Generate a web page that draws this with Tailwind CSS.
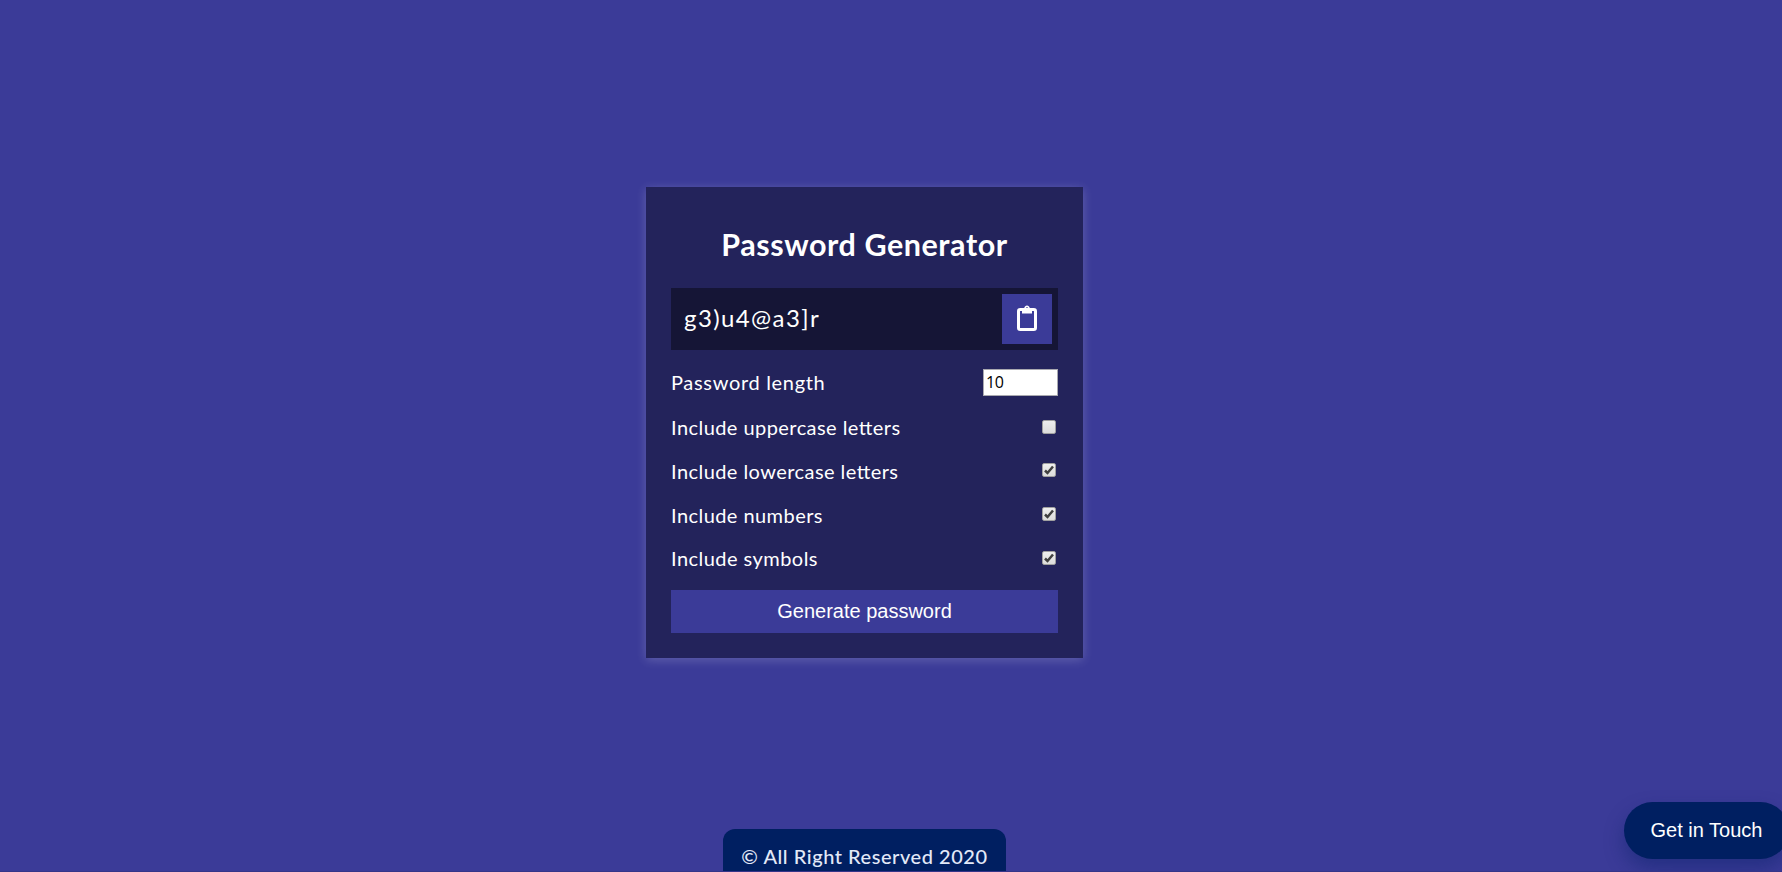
<!DOCTYPE html>
<html lang="en">
<head>
<meta charset="utf-8">
<title>Password Generator</title>
<script src="https://cdn.jsdelivr.net/npm/@tailwindcss/browser@4"></script>
</head>
<body class="relative flex h-screen flex-col items-center overflow-hidden border-b border-[#353589] bg-[#3b3b98] pr-[53px] pt-[187px] font-['Lato','Open_Sans',sans-serif] text-white">
  <main class="flex h-[471px] w-[437px] shrink-0 flex-col bg-[#23235b] px-[25px] shadow-[0_2px_10px_rgba(255,255,255,0.2)]">
    <h2 class="mt-[37px] h-[64px] text-center text-[30.5px] leading-[40px] font-bold tracking-[0.55px] whitespace-nowrap">Password Generator</h2>
    <div class="flex h-[62px] items-center justify-between bg-[#151536] p-[6px] pl-[13px]">
      <span class="pb-[2px] text-[24px] leading-[30px] tracking-[1.4px]">g3)u4@a3]r</span>
      <button class="flex size-[50px] items-center justify-center bg-[#3b3b98] pb-[2px]" aria-label="Copy">
        <svg class="h-[26px] w-5" viewBox="0 0 20 26" fill="none"><rect x="1.5" y="4.5" width="17" height="20" rx="1.8" stroke="white" stroke-width="3"/><path fill-rule="evenodd" d="M5 3H7.2C7.700 1.200 8.600 .4 10 .4S12.300 1.200 12.800 3H15V8.500H5ZM10 2.300A1.200 1.200 0 1 0 10 4.700A1.200 1.200 0 1 0 10 2.300Z" fill="white"/></svg>
      </button>
    </div>
    <div class="mt-[19px] flex h-[27px] items-center justify-between">
      <label class="pb-[2px] text-[20px] leading-[26px] tracking-[0.68px]">Password length</label>
      <div class="h-[27px] w-[75px] border border-[#a9a9b0] bg-white pl-[2px] font-['Open_Sans',sans-serif] text-[16px] leading-[24px] tracking-[-0.3px] text-black">10</div>
    </div>
    <div class="mt-[18px] flex h-[26px] items-start justify-between pr-[2px]">
      <label class="text-[20px] leading-[26px] tracking-[0.44px] [font-feature-settings:'liga']">Include uppercase letters</label>
      <i class="mt-[6px] size-[14px] rounded-[2px] border border-[#a0a0a0] bg-linear-to-b from-[#eeeeee] to-[#dcdcdc]"></i>
    </div>
    <div class="mt-[18px] flex h-[26px] items-start justify-between pr-[2px]">
      <label class="text-[20px] leading-[26px] tracking-[0.44px] [font-feature-settings:'liga']">Include lowercase letters</label>
      <i class="mt-[5px] size-[14px] rounded-[2px] border border-[#a0a0a0] bg-linear-to-b from-[#eeeeee] to-[#dcdcdc]"><svg class="size-3" viewBox="0 0 12 12"><path d="M2 6.500 4.500 9 10 2.500" fill="none" stroke="#404040" stroke-width="2.500"/></svg></i>
    </div>
    <div class="mt-[18px] flex h-[26px] items-start justify-between pr-[2px]">
      <label class="text-[20px] leading-[26px] tracking-[0.44px]">Include numbers</label>
      <i class="mt-[5px] size-[14px] rounded-[2px] border border-[#a0a0a0] bg-linear-to-b from-[#eeeeee] to-[#dcdcdc]"><svg class="size-3" viewBox="0 0 12 12"><path d="M2 6.500 4.500 9 10 2.500" fill="none" stroke="#404040" stroke-width="2.500"/></svg></i>
    </div>
    <div class="mt-[17px] flex h-[26px] items-start justify-between pr-[2px]">
      <label class="text-[20px] leading-[26px] tracking-[0.46px]">Include symbols</label>
      <i class="mt-[6px] size-[14px] rounded-[2px] border border-[#a0a0a0] bg-linear-to-b from-[#eeeeee] to-[#dcdcdc]"><svg class="size-3" viewBox="0 0 12 12"><path d="M2 6.500 4.500 9 10 2.500" fill="none" stroke="#404040" stroke-width="2.500"/></svg></i>
    </div>
    <button class="mt-[19px] h-[43px] shrink-0 bg-[#3b3b98] font-['Liberation_Sans',Arial,sans-serif] text-[20px] leading-[43px]">Generate password</button>
  </main>
  <footer class="mt-[171px] h-[43px] w-[283px] shrink-0 rounded-t-[12px] bg-[#001f61] pt-[14px] text-center text-[20px] leading-[26px] font-medium tracking-[0.54px] whitespace-nowrap text-[#e3e9f8]">© All Right Reserved 2020</footer>
  <button class="absolute top-[802px] left-[1624px] h-[57px] w-[165px] rounded-full bg-[#001f61] pb-[2px] font-['Liberation_Sans',Arial,sans-serif] text-[20px] whitespace-nowrap shadow-[0_10px_20px_rgba(0,31,97,0.4)]">Get in Touch</button>
</body>
</html>
